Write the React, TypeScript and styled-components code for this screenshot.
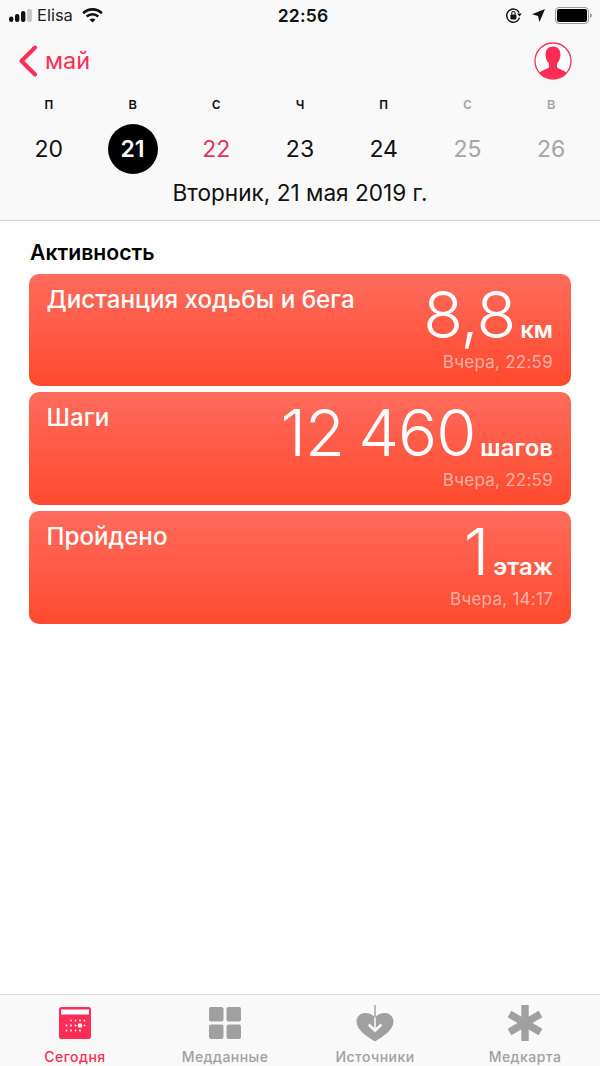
import React from 'react';
import styled, { createGlobalStyle } from 'styled-components';

const pink = '#ff2d55';
const grey = '#a0a0a0';

const GlobalStyle = createGlobalStyle`
  html, body {
    margin: 0;
    padding: 0;
    background: #fff;
    font-family: Inter, "Liberation Sans", sans-serif;
  }
`;

const Page = styled.div`
  width: 600px;
  height: 1066px;
  display: flex;
  flex-direction: column;
  overflow: hidden;
  background: #fff;
`;

const Header = styled.header`
  height: 221px;
  box-sizing: border-box;
  background: #f9f9f9;
  border-bottom: 1px solid #d4d4d4;
  display: flex;
  flex-direction: column;
  flex: none;
`;

const StatusBar = styled.div`
  height: 30px;
  padding: 0 8px 0 9px;
  display: grid;
  grid-template-columns: 1fr auto 1fr;
  align-items: center;
  font-size: 16px;
  color: #111;
`;

const StatusLeft = styled.div`
  display: flex;
  align-items: center;
  gap: 5px;
`;

const Carrier = styled.span`
  color: #222;
  font-size: 16.5px;
  margin: 0 4px 0 -1px;
`;

const Clock = styled.span`
  font-weight: 600;
  font-size: 17.5px;
  letter-spacing: 0.2px;
  margin-left: 5px;
`;

const StatusRight = styled.div`
  display: flex;
  align-items: center;
  justify-content: flex-end;
  gap: 10px;
`;

const NavRow = styled.div`
  height: 60px;
  padding: 1px 28px 0 18px;
  box-sizing: border-box;
  display: flex;
  align-items: center;
  justify-content: space-between;
`;

const BackLink = styled.div`
  display: flex;
  align-items: center;
  gap: 7px;
  color: ${pink};
  font-size: 23.5px;
`;

const Week = styled.div`
  display: grid;
  grid-template-columns: repeat(7, 1fr);
  padding: 0 7px;
`;

const DayName = styled.div<{ $muted?: boolean }>`
  height: 27px;
  display: flex;
  align-items: center;
  justify-content: center;
  font-size: 15.5px;
  font-weight: 500;
  color: ${(p) => (p.$muted ? '#a6a6a6' : '#111')};
`;

const DayNumber = styled.div<{ $tone: string; $selected?: boolean }>`
  width: 50px;
  height: 50px;
  margin: 7px auto 0;
  border-radius: 50%;
  display: flex;
  align-items: center;
  justify-content: center;
  font-size: 23px;
  font-weight: ${(p) => (p.$selected ? 600 : 400)};
  background: ${(p) => (p.$selected ? '#000' : 'transparent')};
  color: ${(p) => p.$tone};
`;

const DateTitle = styled.div`
  margin-top: 3px;
  text-align: center;
  font-size: 22.6px;
  line-height: 32px;
  color: #111;
`;

const Content = styled.main`
  flex: 1;
  padding: 16.9px 29px 0;
`;

const SectionTitle = styled.h2`
  margin: 0 0 8px 1px;
  font-size: 21.2px;
  line-height: 28px;
  font-weight: 600;
  color: #000;
`;

const CardList = styled.div`
  display: flex;
  flex-direction: column;
  gap: 6px;
`;

const Card = styled.article`
  height: 112.55px;
  box-sizing: border-box;
  padding: 11px 18px 0 17.5px;
  border-radius: 10px;
  background: linear-gradient(180deg, #ff6b5c 0%, #ff4a2e 100%);
  color: #fff;
  display: flex;
  justify-content: space-between;
`;

const CardTitle = styled.div`
  font-size: 24.2px;
  line-height: 30px;
  font-weight: 500;
  color: #fff;
`;

const CardValue = styled.div`
  display: flex;
  flex-direction: column;
  align-items: flex-end;
`;

const Reading = styled.div`
  display: flex;
  align-items: baseline;
  gap: 5px;
  height: 67px;
  margin-top: -3px;
`;

const BigNumber = styled.span`
  font-size: 65px;
  line-height: 66px;
  font-weight: 300;
  letter-spacing: -1px;
  word-spacing: -3px;
`;

const Unit = styled.span`
  font-size: 24px;
  font-weight: 600;
`;

const Stamp = styled.div`
  margin-top: 3px;
  font-size: 17px;
  line-height: 20px;
  color: rgba(255, 255, 255, 0.55);
  letter-spacing: 0.25px;
`;

const TabBar = styled.nav`
  height: 72px;
  box-sizing: border-box;
  flex: none;
  background: #f9f9f9;
  border-top: 1px solid #d8d8d8;
  display: grid;
  grid-template-columns: repeat(4, 1fr);
`;

const Tab = styled.div<{ $active?: boolean }>`
  display: flex;
  flex-direction: column;
  align-items: center;
  color: ${(p) => (p.$active ? pink : grey)};
`;

const TabIcon = styled.div`
  height: 52px;
  padding-top: 4px;
  box-sizing: border-box;
  display: flex;
  align-items: center;
  justify-content: center;
`;

const TabLabel = styled.span`
  font-size: 14px;
  line-height: 20px;
  font-weight: 500;
  letter-spacing: 0.45px;
`;

const Signal = () => (
  <svg width="24" height="13" viewBox="0 0 24 13">
    <rect x="0" y="7.5" width="4.4" height="5.5" rx="2.2" fill="#111" />
    <rect x="6" y="5" width="4.4" height="8" rx="2" fill="#111" />
    <rect x="12" y="2" width="4.4" height="11" rx="2" fill="#111" />
    <rect x="18" y="0" width="5" height="13" rx="2" fill="#c6c6c6" />
  </svg>
);

const Wifi = () => (
  <svg width="21" height="15" viewBox="0 0 22 16" fill="none" stroke="#111" strokeWidth="2.8">
    <path d="M1 5.5C6.8 0.2 15.2 0.2 21 5.5" />
    <path d="M4.8 9C8.4 5.8 13.6 5.8 17.2 9" />
    <path d="M11 15.5L7.8 12.2C9.8 10.8 12.2 10.8 14.2 12.2Z" fill="#111" stroke="none" />
  </svg>
);

const RotationLock = () => (
  <svg width="17" height="17" viewBox="0 0 17 17" fill="none">
    <path d="M14.6 10.6A6.6 6.6 0 1 1 14.2 5.6" stroke="#111" strokeWidth="1.4" />
    <path d="M12 6.4L16.6 6.4L14.6 9.4Z" fill="#111" />
    <rect x="5.4" y="7.6" width="6" height="4.8" rx="0.8" fill="#111" />
    <path d="M6.7 7.6V6.2A1.7 1.7 0 0 1 10.1 6.2V7.6" stroke="#111" strokeWidth="1.1" />
  </svg>
);

const LocationArrow = () => (
  <svg width="13" height="13" viewBox="0 0 15 15">
    <path d="M15 0L8.6 15L7 8L0 6.2Z" fill="#111" />
  </svg>
);

const Battery = () => (
  <svg width="37" height="17" viewBox="0 0 37 17">
    <rect x="0.5" y="0.5" width="33" height="16" rx="3.5" fill="none" stroke="#9a9a9a" />
    <rect x="2" y="2" width="30" height="13" rx="2" fill="#000" />
    <path d="M35 6C36.2 6.4 36.8 7.2 36.8 8.5C36.8 9.8 36.2 10.6 35 11Z" fill="#9a9a9a" />
  </svg>
);

const BackChevron = () => (
  <svg width="20" height="32" viewBox="0 0 20 32" fill="none">
    <path d="M17 2.5L3.5 16L17 29.5" stroke={pink} strokeWidth="4" strokeLinecap="round" strokeLinejoin="round" />
  </svg>
);

const ProfileIcon = () => (
  <svg width="38" height="38" viewBox="0 0 38 38">
    <defs>
      <clipPath id="profile-clip">
        <circle cx="19" cy="19" r="17.6" />
      </clipPath>
    </defs>
    <circle cx="19" cy="19" r="18" fill="#fff" stroke={pink} strokeWidth="1.3" />
    <g clipPath="url(#profile-clip)" fill={pink}>
      <path d="M19 4.5C14.2 4.5 11.5 8 11.5 12.6C11.5 16.4 13.2 20 15 21.8V25C15 26.6 7.5 28 5.5 31V38H32.5V31C30.5 28 23 26.6 23 25V21.8C24.8 20 26.5 16.4 26.5 12.6C26.5 8 23.8 4.5 19 4.5Z" />
    </g>
  </svg>
);

const CalendarIcon = () => {
  const rows = [
    { y: 13.5, xs: [12, 16.5, 21, 25.5] },
    { y: 18.5, xs: [7.5, 12, 16.5, 25.5] },
    { y: 23.5, xs: [7.5, 12, 16.5, 21] },
  ];
  return (
    <svg width="32" height="32" viewBox="0 0 32 32">
      <rect width="32" height="32" rx="2.5" fill={pink} />
      <rect x="2" y="2.5" width="28" height="5" fill="#fff" />
      {rows.map((row) =>
        row.xs.map((x) => <circle key={`${row.y}-${x}`} cx={x} cy={row.y} r="0.9" fill="#fff" />)
      )}
      <circle cx="21" cy="18.5" r="2.3" fill="#fff" />
    </svg>
  );
};

const GridIcon = () => (
  <svg width="32" height="32" viewBox="0 0 32 32" fill={grey}>
    <rect x="0" y="0" width="14.5" height="14.5" rx="2" />
    <rect x="17.5" y="0" width="14.5" height="14.5" rx="2" />
    <rect x="0" y="17.5" width="14.5" height="14.5" rx="2" />
    <rect x="17.5" y="17.5" width="14.5" height="14.5" rx="2" />
  </svg>
);

const HeartIcon = () => (
  <svg width="38" height="37" viewBox="0 0 38 37">
    <path d="M19 36.5C12 32 0.5 25.5 0.5 16.5C0.5 11.5 4.5 8 9.4 8C13.4 8 16.6 9.6 19 12.4C21.4 9.6 24.6 8 28.6 8C33.5 8 37.5 11.5 37.5 16.5C37.5 25.5 26 32 19 36.5Z" fill={grey} />
    <path d="M19 0V12.5" stroke={grey} strokeWidth="1.4" />
    <path d="M19 12.5V25" stroke="#f9f9f9" strokeWidth="1.6" />
    <path d="M12.6 19.5L19 25.5L25.4 19.5" fill="none" stroke="#f9f9f9" strokeWidth="2.8" />
  </svg>
);

const StarIcon = () => (
  <svg width="36" height="36" viewBox="0 0 36 36" stroke={grey} strokeWidth="7.4">
    <path d="M18 0V36" />
    <path d="M2.5 9L33.5 27" />
    <path d="M33.5 9L2.5 27" />
  </svg>
);

const weekdays = ['п', 'в', 'с', 'ч', 'п', 'с', 'в'];

const days = [
  { label: 20, tone: '#111' },
  { label: 21, tone: '#fff', selected: true },
  { label: 22, tone: '#e6305f' },
  { label: 23, tone: '#111' },
  { label: 24, tone: '#111' },
  { label: 25, tone: '#a6a6a6' },
  { label: 26, tone: '#a6a6a6' },
];

const readings = [
  { title: 'Дистанция ходьбы и бега', value: '8,8', unit: 'км', stamp: 'Вчера, 22:59' },
  { title: 'Шаги', value: '12 460', unit: 'шагов', stamp: 'Вчера, 22:59' },
  { title: 'Пройдено', value: '1', unit: 'этаж', stamp: 'Вчера, 14:17' },
];

const tabs = [
  { label: 'Сегодня', icon: <CalendarIcon />, active: true },
  { label: 'Медданные', icon: <GridIcon /> },
  { label: 'Источники', icon: <HeartIcon /> },
  { label: 'Медкарта', icon: <StarIcon /> },
];

const App: React.FC = () => {
  return (
    <Page>
      <GlobalStyle />
      <Header>
        <StatusBar>
          <StatusLeft>
            <Signal />
            <Carrier>Elisa</Carrier>
            <Wifi />
          </StatusLeft>
          <Clock>22:56</Clock>
          <StatusRight>
            <RotationLock />
            <LocationArrow />
            <Battery />
          </StatusRight>
        </StatusBar>
        <NavRow>
          <BackLink>
            <BackChevron />
            май
          </BackLink>
          <ProfileIcon />
        </NavRow>
        <Week>
          {weekdays.map((day, index) => (
            <DayName key={index} $muted={index > 4}>
              {day}
            </DayName>
          ))}
          {days.map((day) => (
            <DayNumber key={day.label} $tone={day.tone} $selected={day.selected}>
              {day.label}
            </DayNumber>
          ))}
        </Week>
        <DateTitle>Вторник, 21 мая 2019 г.</DateTitle>
      </Header>
      <Content>
        <SectionTitle>Активность</SectionTitle>
        <CardList>
          {readings.map((item) => (
            <Card key={item.title}>
              <CardTitle>{item.title}</CardTitle>
              <CardValue>
                <Reading>
                  <BigNumber>{item.value}</BigNumber>
                  <Unit>{item.unit}</Unit>
                </Reading>
                <Stamp>{item.stamp}</Stamp>
              </CardValue>
            </Card>
          ))}
        </CardList>
      </Content>
      <TabBar>
        {tabs.map((tab) => (
          <Tab key={tab.label} $active={tab.active}>
            <TabIcon>{tab.icon}</TabIcon>
            <TabLabel>{tab.label}</TabLabel>
          </Tab>
        ))}
      </TabBar>
    </Page>
  );
};

export default App;
